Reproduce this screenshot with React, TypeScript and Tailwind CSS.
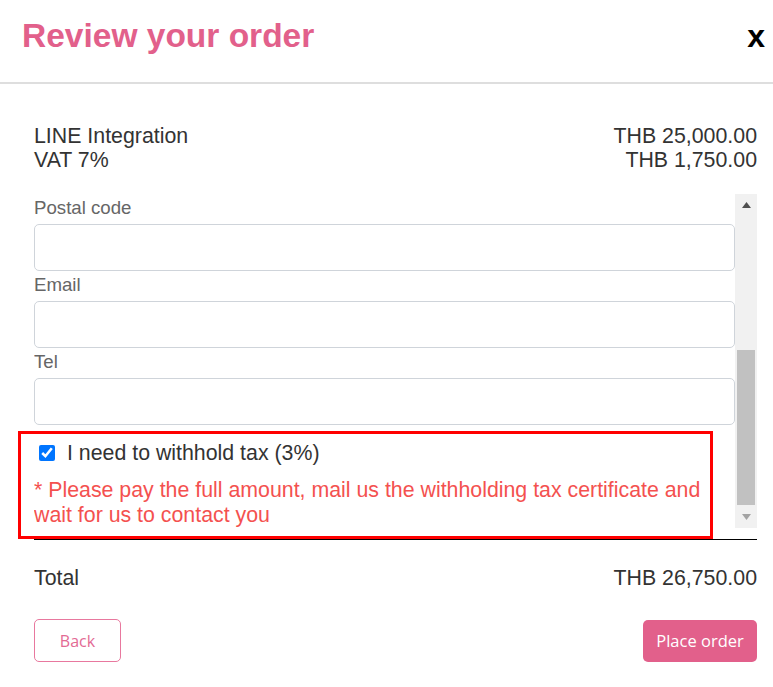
import React from "react";

const sans = { fontFamily: '"Liberation Sans", Arial, sans-serif' };

function Field({ label }: { label: string }) {
  return (
    <div className="flex flex-col">
      <div className="h-[30px] text-[18.67px] leading-[28px] text-[#666]">{label}</div>
      <div className="h-[47px] w-full rounded-[5px] border border-[#cfd4da] bg-white" />
    </div>
  );
}

export default function App() {
  return (
    <div
      className="relative h-[687px] w-[773px] overflow-hidden bg-white"
      style={sans}
    >
      {/* Header */}
      <div className="flex h-[84px] items-start justify-between border-b-2 border-[#dedede] pl-[22px] pr-[8px] pt-[16px]">
        <h1 className="text-[33.5px] font-bold leading-[40px] text-[#e2608b]">
          Review your order
        </h1>
        <button className="text-[32px] font-bold leading-[40px] text-black">x</button>
      </div>

      {/* Body */}
      <div className="pl-[34px] pr-[16px]">
        <div className="mt-[40px] text-[21.33px] leading-[24px] text-[#333]">
          <div className="flex justify-between">
            <span>LINE Integration</span>
            <span>THB 25,000.00</span>
          </div>
          <div className="flex justify-between">
            <span>VAT 7%</span>
            <span>THB 1,750.00</span>
          </div>
        </div>

        {/* Scroll area */}
        <div className="mt-[22px] flex h-[334px]">
          <div className="flex-1 overflow-hidden">
            <Field label="Postal code" />
            <Field label="Email" />
            <Field label="Tel" />
            <div className="mt-[14px] flex h-[28px] items-center">
              <input
                type="checkbox"
                checked
                readOnly
                className="ml-[5px] h-4 w-4"
              />
              <span className="ml-[12px] text-[21.33px] leading-[28px] text-[#333]">
                I need to withhold tax (3%)
              </span>
            </div>
            <p className="mt-[11px] w-[685px] text-[21.33px] leading-[25px] text-[#f4514f]">
              * Please pay the full amount, mail us the withholding tax certificate and wait for us to contact you
            </p>
          </div>
          {/* Scrollbar */}
          <div className="flex w-[22px] flex-col items-center bg-[#f1f1f1]">
            <div className="flex h-[22px] w-full items-center justify-center">
              <svg width="9" height="6" viewBox="0 0 9 6">
                <path d="M0 6 L4.5 0 L9 6 Z" fill="#505050" />
              </svg>
            </div>
            <div className="mt-[134px] h-[155px] w-[18px] bg-[#c1c1c1]" />
            <div className="flex h-[23px] w-full items-center justify-center">
              <svg width="9" height="6" viewBox="0 0 9 6">
                <path d="M0 0 L9 0 L4.5 6 Z" fill="#a3a3a3" />
              </svg>
            </div>
          </div>
        </div>

        <div className="mt-[11px] border-t border-black" />

        <div className="mt-[26px] flex justify-between text-[21.33px] leading-[24px] text-[#333]">
          <span>Total</span>
          <span>THB 26,750.00</span>
        </div>

        <div
          className="mt-[29px] flex items-start justify-between"
          style={{ fontFamily: '"Open Sans", sans-serif' }}
        >
          <button className="h-[43px] w-[87px] rounded-[5px] border border-[#e8789e] bg-white text-[16px] text-[#e36a94]">
            Back
          </button>
          <button className="mt-[1px] h-[42px] w-[114px] rounded-[5px] bg-[#e2608b] text-[16.5px] text-white">
            Place order
          </button>
        </div>
      </div>

      {/* Red annotation box */}
      <div className="pointer-events-none absolute left-[18px] top-[431px] h-[108px] w-[695px] border-[3px] border-[#ff0000]" />
    </div>
  );
}
